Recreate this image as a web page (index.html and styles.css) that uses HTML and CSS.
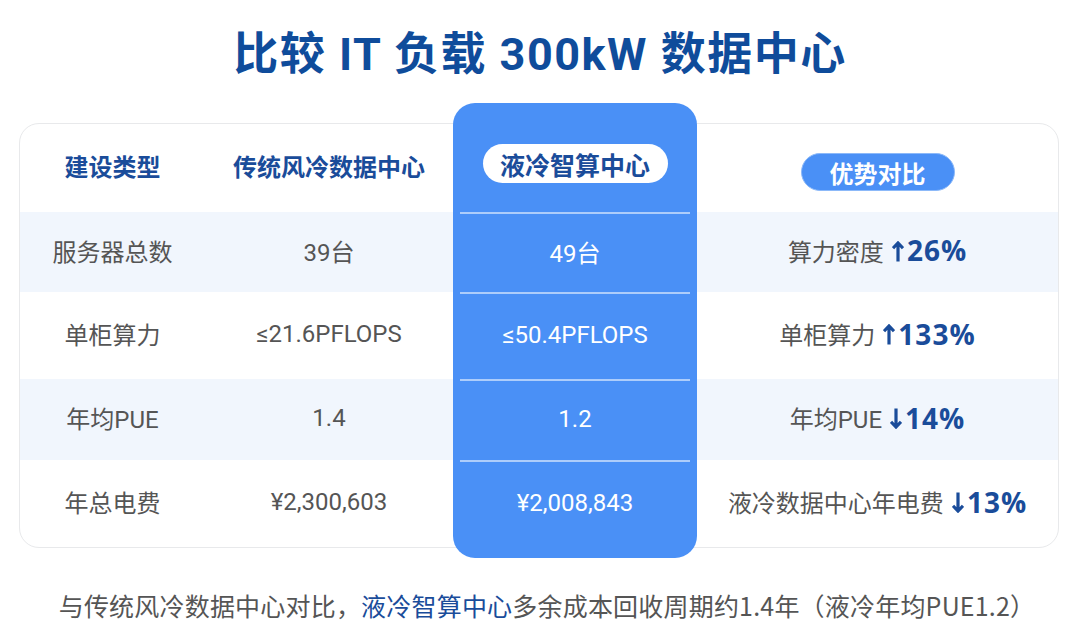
FILE: index.html
```html
<!DOCTYPE html>
<html lang="zh-CN">
<head>
<meta charset="utf-8">
<title>比较 IT 负载 300kW 数据中心</title>
<link rel="stylesheet" href="styles.css">
</head>
<body>
<h1 class="title">比较 IT 负载 300kW 数据中心</h1>

<div class="card">
  <div class="col col-type">
    <div class="cell head"><span class="head-text">建设类型</span></div>
    <div class="cell r1 stripe">服务器总数</div>
    <div class="cell r2">单柜算力</div>
    <div class="cell r3 stripe">年均PUE</div>
    <div class="cell r4">年总电费</div>
  </div>
  <div class="col col-air">
    <div class="cell head"><span class="head-text">传统风冷数据中心</span></div>
    <div class="cell r1 stripe">39台</div>
    <div class="cell r2">≤21.6PFLOPS</div>
    <div class="cell r3 stripe">1.4</div>
    <div class="cell r4">¥2,300,603</div>
  </div>
  <div class="col col-liquid">
    <div class="cell hl-head"><span class="pill pill-white">液冷智算中心</span></div>
    <div class="cell hl r1">49台</div>
    <div class="cell hl r2">≤50.4PFLOPS</div>
    <div class="cell hl r3">1.2</div>
    <div class="cell hl hl-last">¥2,008,843</div>
  </div>
  <div class="col col-adv">
    <div class="cell head adv-head"><span class="pill pill-blue">优势对比</span></div>
    <div class="cell r1 stripe"><span class="adv-label">算力密度</span><svg class="arrow" viewBox="0 0 12 21"><path d="M6 20.5V2M1 7.2L6 2L11 7.2"/></svg><span class="adv-num">26%</span></div>
    <div class="cell r2"><span class="adv-label">单柜算力</span><svg class="arrow" viewBox="0 0 12 21"><path d="M6 20.5V2M1 7.2L6 2L11 7.2"/></svg><span class="adv-num">133%</span></div>
    <div class="cell r3 stripe"><span class="adv-label">年均PUE</span><svg class="arrow" viewBox="0 0 12 21"><path d="M6 0.5V19M1 13.8L6 19L11 13.8"/></svg><span class="adv-num">14%</span></div>
    <div class="cell r4"><span class="adv-label">液冷数据中心年电费</span><svg class="arrow" viewBox="0 0 12 21"><path d="M6 0.5V19M1 13.8L6 19L11 13.8"/></svg><span class="adv-num">13%</span></div>
  </div>
</div>

<p class="note">与传统风冷数据中心对比，<span class="note-hl">液冷智算中心</span>多余成本回收周期约1.4年（液冷年均PUE1.2）</p>
</body>
</html>
```

FILE: styles.css
```css
* { box-sizing: border-box; }

html, body {
  margin: 0;
  padding: 0;
  background: #ffffff;
}

body {
  width: 1080px;
  height: 636px;
  overflow: hidden;
  font-family: Roboto, "Noto Sans CJK SC", sans-serif;
  color: #555555;
}

.title {
  margin: 0;
  padding-top: 28px;
  height: 124px;
  text-align: center;
  font-family: Roboto, "Noto Sans CJK SC", sans-serif;
  font-weight: 700;
  font-size: 45px;
  line-height: 54px;
  letter-spacing: 1.5px;
  color: #0f4c9b;
}

.card {
  margin: -1px 21px 0 19px;
  height: 425px;
  border: 1px solid #e8e9eb;
  border-radius: 20px;
  display: flex;
  background: #ffffff;
}

.col {
  display: flex;
  flex-direction: column;
}

.col-type { width: 185px; }
.col-air { width: 248px; }
.col-liquid {
  width: 244px;
  margin-top: -21px;
  margin-bottom: -11px;
  background: #4a90f6;
  border-radius: 22px;
  color: #ffffff;
}
.col-adv { flex: 1; }

.cell {
  display: flex;
  align-items: center;
  justify-content: center;
  font-size: 24px;
  white-space: nowrap;
  padding-bottom: 4px;
}

.head { height: 88px; }
.r1 { height: 80px; }
.r2 { height: 87px; }
.r3 { height: 81px; }
.r4 { height: 87px; }

.stripe { background: #f1f6fd; }

.head-text {
  font-weight: 700;
  font-size: 24px;
  color: #1a4c9a;
  padding-bottom: 2px;
}

.hl-head {
  height: 109px;
  padding-top: 12px;
  padding-bottom: 0;
}

.hl {
  margin: 0 7px;
  border-top: 2px solid rgba(255, 255, 255, 0.55);
}

.hl-last {
  height: 97px;
  padding-bottom: 14px;
}

.pill {
  display: inline-flex;
  align-items: center;
  justify-content: center;
  border-radius: 20px;
  font-weight: 700;
  font-size: 24px;
}

.pill-white {
  width: 185px;
  height: 39px;
  background: #ffffff;
  color: #1a4c9a;
  font-size: 25px;
}

.adv-head { padding-top: 8px; padding-bottom: 0; }

.pill-blue {
  width: 154px;
  height: 38px;
  background: #4a90f6;
  border: 1px solid #8cb9f9;
  color: #ffffff;
}

.adv-label {
  color: #555555;
  font-size: 24px;
}

.arrow {
  width: 12px;
  height: 21px;
  margin: 2px 3px 0 8px;
  fill: none;
  stroke: #1a4c9a;
  stroke-width: 3.2;
}

.adv-num {
  font-family: "Open Sans", Roboto, sans-serif;
  font-weight: 700;
  font-size: 28px;
  letter-spacing: 1px;
  color: #1a4c9a;
}

.note {
  margin: 42px 0 0 0;
  padding-left: 14px;
  text-align: center;
  font-size: 25px;
  line-height: 30px;
  letter-spacing: 0.2px;
  color: #555555;
  font-family: "Noto Sans CJK SC", sans-serif;
}

.note-hl { color: #1a4c9a; }
```
